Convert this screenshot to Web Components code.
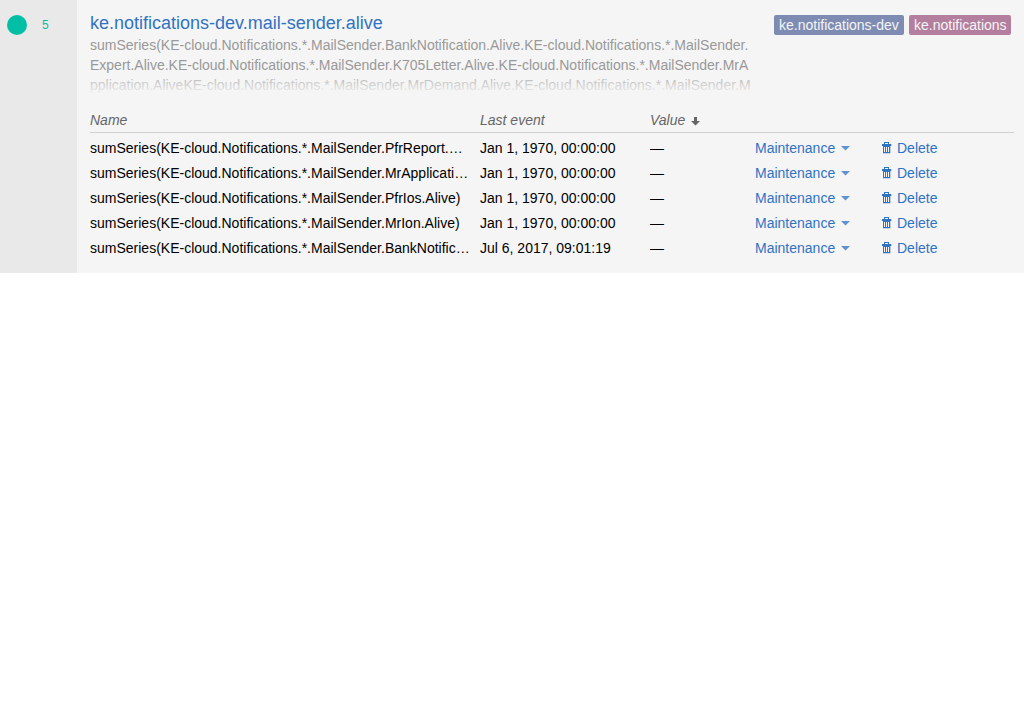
<!DOCTYPE html>
<html lang="en"><head><meta charset="utf-8"><title>Trigger</title>
<style>
body{margin:0;background:#fff;color:#000;font:14px/20px "Liberation Sans",Arial,sans-serif}
</style></head><body>
<trigger-card>
  <trigger-state slot="state">5</trigger-state>
  <span slot="title">ke.notifications-dev.mail-sender.alive</span>
  <tag-label slot="tags" style="--tag:#7e8cb4;--size:130px">ke.notifications-dev</tag-label>
  <tag-label slot="tags" style="--tag:#b47e9e;--size:102px">ke.notifications</tag-label>
  <target-text slot="targets">
    <div>sumSeries(KE-cloud.Notifications.*.MailSender.BankNotification.Alive.KE-cloud.Notifications.*.MailSender.</div>
    <div>Expert.Alive.KE-cloud.Notifications.*.MailSender.K705Letter.Alive.KE-cloud.Notifications.*.MailSender.MrA</div>
    <div>pplication.AliveKE-cloud.Notifications.*.MailSender.MrDemand.Alive.KE-cloud.Notifications.*.MailSender.M</div>
  </target-text>
  <metric-table>
    <metric-row date="Jan 1, 1970, 00:00:00">sumSeries(KE-cloud.Notifications.*.MailSender.PfrReport.…</metric-row>
    <metric-row date="Jan 1, 1970, 00:00:00">sumSeries(KE-cloud.Notifications.*.MailSender.MrApplicati…</metric-row>
    <metric-row date="Jan 1, 1970, 00:00:00">sumSeries(KE-cloud.Notifications.*.MailSender.PfrIos.Alive)</metric-row>
    <metric-row date="Jan 1, 1970, 00:00:00">sumSeries(KE-cloud.Notifications.*.MailSender.MrIon.Alive)</metric-row>
    <metric-row date="Jul 6, 2017, 09:01:19">sumSeries(KE-cloud.Notifications.*.MailSender.BankNotific…</metric-row>
  </metric-table>
</trigger-card>
<script>
function define(name, html, init) {
  const template = document.createElement('template');
  template.innerHTML = html;
  customElements.define(name, class extends HTMLElement {
    constructor() {
      super();
      this.attachShadow({mode: 'open'}).append(template.content.cloneNode(true));
    }
    connectedCallback() { if (init) init(this, this.shadowRoot); }
  });
}

define('trigger-card', `<style>
:host{display:flex;height:273px;background:#f5f5f5}
aside{width:77px;flex:none;background:#e9e9e9}
main{flex:1;min-width:0;padding:13px 10px 0 13px}
header{display:flex;justify-content:space-between;height:22px}
h1{margin:0;font-size:18px;line-height:20px;font-weight:400;color:#3072c4}
.tags{display:flex;gap:5px;padding:2px 3px 0 0}
</style>
<aside><slot name="state"></slot></aside>
<main><header><h1><slot name="title"></slot></h1><div class="tags"><slot name="tags"></slot></div></header>
<slot name="targets"></slot><slot></slot></main>`);

define('trigger-state', `<style>
:host{display:flex;align-items:center;gap:15px;padding:15px 0 0 7px;font-size:12px;line-height:20px;color:#00bfa5}
i{width:20px;height:20px;border-radius:50%;background:#00bfa5}
</style><i></i><span><slot></slot></span>`);

define('tag-label', `<style>
:host{display:block;box-sizing:border-box;width:var(--size);height:20px;padding-left:5px;white-space:nowrap;border-radius:2px;background:var(--tag);color:#f5f5f5}
</style><slot></slot>`);

define('target-text', `<style>
:host{display:block;position:relative;height:60px;overflow:hidden;white-space:nowrap;color:#999}
.fade{position:absolute;left:0;right:0;bottom:0;height:20px;background:linear-gradient(rgba(245,245,245,.25),#f5f5f5)}
</style><slot></slot><div class="fade"></div>`);

define('metric-table', `<style>
:host{display:block;padding-top:15px}
.head{display:grid;grid-template-columns:390px 170px 1fr;height:22px;border-bottom:1px solid #d0d0d0;font-style:italic;color:#666}
.rows{display:flex;flex-direction:column;gap:5px;padding-top:5px}
.value{display:flex;gap:6px}
svg{display:block;margin-top:7px}
</style>
<div class="head"><span>Name</span><span>Last event</span><span class="value">Value <svg width="9" height="9"><path d="M3 0h3v4h3L4.5 8.500 0 4h3z" fill="#666"/></svg></span></div>
<div class="rows"><slot></slot></div>`);

define('metric-row', `<style>
:host{display:grid;grid-template-columns:390px 170px 105px 127px 1fr;height:20px}
.name{width:380px;overflow:hidden;text-overflow:ellipsis;white-space:nowrap}
.link{display:flex;color:#3072c4}
.caret{margin:8px 0 0 6px;opacity:.75}
.bin{margin:4px 5px 0 0}
</style>
<span class="name"><slot></slot></span><span class="date"></span><span class="dash">—</span>
<span class="link">Maintenance<svg class="caret" width="9" height="5"><path d="M0 0h9L4.5 4.500z" fill="#3072c4"/></svg></span>
<span class="link"><svg class="bin" width="10" height="12"><path fill="#3072c4" fill-rule="evenodd" d="M2 0h5v2h2.300v2H8.300V11.300H1V4H0V2h2zM3 1v1h3V1zM2 5v5h1V5zM4 5v5h1V5zM6 5v5h1V5z"/></svg>Delete</span>`,
(el, root) => { root.querySelector('.date').textContent = el.getAttribute('date'); });
</script></body></html>
